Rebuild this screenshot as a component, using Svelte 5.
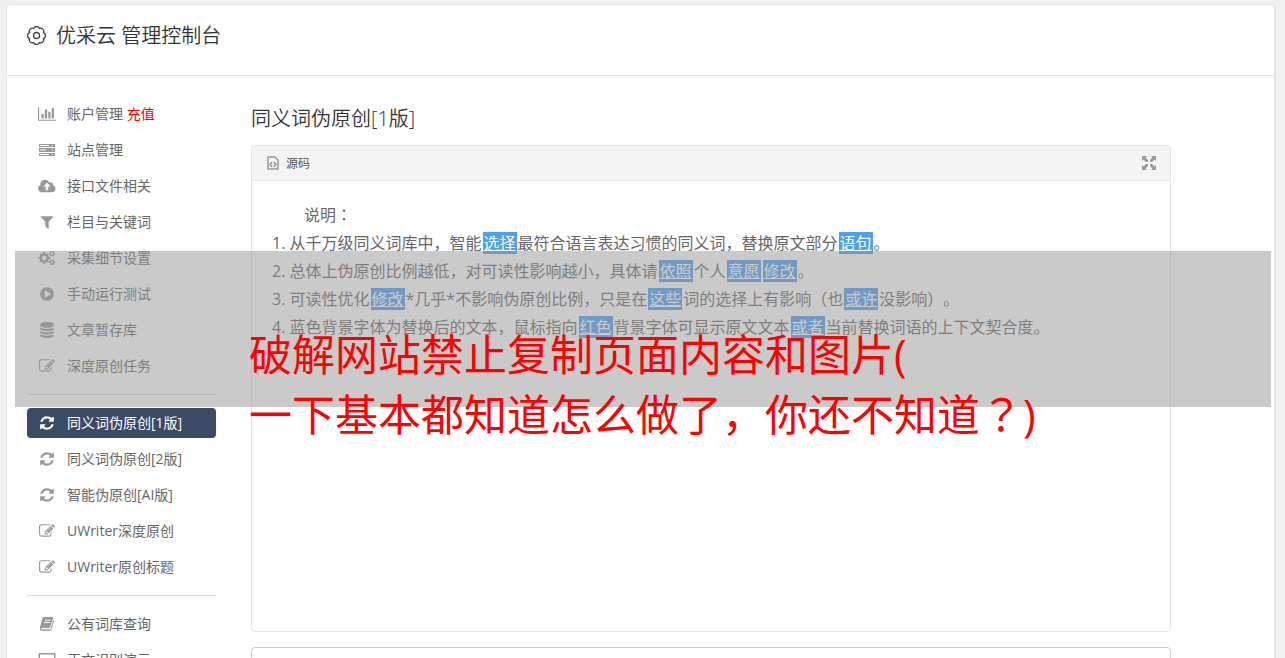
<script>
  const pencil =
    "M888 1184l116-116-152-152-116 116v56h96v96h56zm440-720q-16-16-33 1l-350 350q-17 17-1 33t33-1l350-350q17-17 1-33zm80 594v190q0 119-84.5 203.5t-203.5 84.5h-832q-119 0-203.5-84.5t-84.5-203.5v-832q0-119 84.5-203.5t203.5-84.5h832q63 0 117 25 15 7 18 23 3 17-9 29l-49 49q-14 14-32 8-23-6-45-6h-832q-66 0-113 47t-47 113v832q0 66 47 113t113 47h832q66 0 113-47t47-113v-126q0-13 9-22l64-64q15-15 35-7t20 29zm-96-738l288 288-672 672h-288v-288zm444 132l-92 92-288-288 92-92q28-28 68-28t68 28l152 152q28 28 28 68t-28 68z";
  const refresh =
    "M1639 1056q0 5-1 7-64 268-268 434.5t-478 166.5q-146 0-282.5-55t-243.5-157l-129 129q-19 19-45 19t-45-19-19-45v-448q0-26 19-45t45-19h448q26 0 45 19t19 45-19 45l-137 137q71 66 161 102t187 36q134 0 250-65t186-179q11-17 53-117 8-23 30-23h192q13 0 22.5 9.5t9.5 22.5zm25-800v448q0 26-19 45t-45 19h-448q-26 0-45-19t-19-45 19-45l138-138q-148-137-349-137-134 0-250 65t-186 179q-11 17-53 117-8 23-30 23h-199q-13 0-22.5-9.5t-9.5-22.5v-7q65-268 270-434.5t480-166.5q146 0 284 55.5t245 156.5l130-129q19-19 45-19t45 19 19 45z";

  // toothed ring around cx, cy, with the hole cut by evenodd
  function cog(cx, cy, outer, inner, hole, teeth) {
    const points = [];
    const step = (Math.PI * 2) / teeth;
    for (let i = 0; i < teeth; i++) {
      for (const [offset, r] of [
        [-0.3, inner],
        [-0.2, outer],
        [0.2, outer],
        [0.3, inner],
      ]) {
        const a = (i + offset) * step;
        points.push(
          `${(cx + r * Math.cos(a)).toFixed(2)} ${(cy + r * Math.sin(a)).toFixed(2)}`,
        );
      }
    }
    return `M${points.join("L")}ZM${cx - hole} ${cy}a${hole} ${hole} 0 1 0 ${hole * 2} 0a${hole} ${hole} 0 1 0 ${-hole * 2} 0z`;
  }

  // outline of rounded bumps for the header gear
  function scallop(c, r, bumps) {
    let d = "";
    for (let i = 0; i <= bumps; i++) {
      const a = ((i + 0.5) * Math.PI * 2) / bumps;
      const x = (c + r * Math.cos(a)).toFixed(2);
      const y = (c + r * Math.sin(a)).toFixed(2);
      d += i ? `A3.300 3.300 0 0 1 ${x} ${y}` : `M${x} ${y}`;
    }
    return d + "z";
  }

  const icons = {
    chart: {
      box: "0 0 2048 1792",
      d: "M640 896v512h-256v-512h256zm384-512v1024h-256v-1024h256zm1024 1152v128h-2048v-1536h128v1408h1920zm-640-896v768h-256v-768h256zm384-384v1152h-256v-1152h256z",
    },
    server: {
      box: "0 0 18 16",
      d: "M1.500 2h15q.5 0 .5.500v2q0 .5-.5.5h-15q-.5 0-.5-.5v-2q0-.5.5-.5zM2 3v1h9v-1zM14 3v1h1v-1zM1.500 6h15q.5 0 .5.500v3q0 .5-.5.5h-15q-.5 0-.5-.5v-3q0-.5.5-.5zM2 7.500v1h6v-1zM14 7.500v1h1v-1zM1.500 11h15q.5 0 .5.500v2q0 .5-.5.5h-15q-.5 0-.5-.5v-2q0-.5.5-.5zM2 12v1h9v-1zM14 12v1h1v-1z",
    },
    cloud: {
      box: "0 0 18 16",
      d: "M4 14.300A4 4 0 0 1 2.400 6.700Q2.300 2 7 1.700 10 1.700 11.500 4.400 15 4 15 7.300A3.600 3.600 0 0 1 14.300 14.300zM9 4.700L5.300 8.400H7.700V12.200H10.300V8.400H12.700z",
    },
    filter: {
      box: "0 0 1792 1792",
      d: "M1595 295q17 41-14 70l-493 493v742q0 42-39 59-13 5-25 5-27 0-45-19l-256-256q-19-19-19-45v-486l-493-493q-31-29-14-70 17-39 59-39h1280q42 0 59 39z",
    },
    cogs: {
      box: "0 0 18 16",
      d: cog(6.3, 8, 6, 4.6, 2.2, 8) + cog(14.2, 3.7, 3.2, 2.3, 1.1, 6) + cog(14.2, 12.3, 3.2, 2.3, 1.1, 6),
    },
    play: {
      box: "0 0 1792 1792",
      d: "M896 128q209 0 385.5 103t279.500 279.500 103 385.500-103 385.500-279.500 279.500-385.500 103-385.500-103-279.500-279.500-103-385.500 103-385.500 279.500-279.500 385.500-103zm384 823q32-18 32-55t-32-55l-544-320q-31-19-64-1-32 19-32 56v640q0 37 32 56 16 8 32 8 17 0 32-9z",
    },
    database: {
      box: "0 0 1792 1792",
      d: "M896 768q237 0 443-43t325-127v170q0 69-103 128t-280 93.500-385 34.500-385-34.500-280-93.500-103-128v-170q119 84 325 127t443 43zm0 768q237 0 443-43t325-127v170q0 69-103 128t-280 93.500-385 34.500-385-34.500-280-93.500-103-128v-170q119 84 325 127t443 43zm0-384q237 0 443-43t325-127v170q0 69-103 128t-280 93.500-385 34.500-385-34.500-280-93.500-103-128v-170q119 84 325 127t443 43zm0-1152q208 0 385 34.500t280 93.500 103 128v128q0 69-103 128t-280 93.500-385 34.500-385-34.500-280-93.500-103-128v-128q0-69 103-128t280-93.500 385-34.500z",
    },
    pencil: { box: "0 0 1792 1792", d: pencil },
    refresh: { box: "0 0 1792 1792", d: refresh },
    book: {
      box: "0 0 16 16",
      d: "M4.800 1h8.200q1.300.1 1 1.400L11.300 11q-.4 1-1.400 1H2.800q-.8 0-.7.600.2.700 1 .7h7.600q.7 0 1-.7L14.500 4q.8.500.5 1.500l-2.700 8q-.5 1.200-1.600 1.200H3Q1.200 14.600.900 12.900.700 12 1 11L3.500 2.300Q4 1 4.800 1zM6 3.800L5.700 4.800H11.500L11.800 3.800zM5.300 6L5 7H10.800L11.100 6z",
    },
    monitor: {
      box: "0 0 18 16",
      d: "M1.500 1h15q1 0 1 1v10q0 1-1 1h-5v2h2v1h-9v-1h2v-2h-5q-1 0-1-1v-10q0-1 1-1zM2 2.500v8h14v-8z",
    },
  };

  const menu = [
    [
      { icon: "chart", label: "账户管理", extra: "充值" },
      { icon: "server", label: "站点管理" },
      { icon: "cloud", label: "接口文件相关" },
      { icon: "filter", label: "栏目与关键词" },
      { icon: "cogs", label: "采集细节设置" },
      { icon: "play", label: "手动运行测试" },
      { icon: "database", label: "文章暂存库" },
      { icon: "pencil", label: "深度原创任务" },
    ],
    [
      { icon: "refresh", label: "同义词伪原创[1版]" },
      { icon: "refresh", label: "同义词伪原创[2版]" },
      { icon: "refresh", label: "智能伪原创[AI版]" },
      { icon: "pencil", label: "UWriter深度原创" },
      { icon: "pencil", label: "UWriter原创标题" },
    ],
    [
      { icon: "book", label: "公有词库查询" },
      { icon: "monitor", label: "正文识别演示" },
    ],
  ];
  let active = $state("同义词伪原创[1版]");

  // replaced words are wrapped in braces
  const lines = [
    "1. 从千万级同义词库中，智能{选择}最符合语言表达习惯的同义词，替换原文部分{语句}。",
    "2. 总体上伪原创比例越低，对可读性影响越小，具体请{依照}个人{意愿}{修改}。",
    "3. 可读性优化{修改}*几乎*不影响伪原创比例，只是在{这些}词的选择上有影响（也{或许}没影响）。",
    "4. 蓝色背景字体为替换后的文本，鼠标指向{红色}背景字体可显示原文文本{或者}当前替换词语的上下文契合度。",
  ].map((line) => line.split(/[{}]/));
</script>

<div class="page">
  <div class="console">
    <header>
      <svg class="gear" viewBox="0 0 20 20" aria-hidden="true">
        <path d={scallop(10, 8, 8)} />
        <circle cx="10" cy="10" r="3.200" />
      </svg>
      <h1>优采云 管理控制台</h1>
    </header>

    <div class="content">
      <nav>
        {#each menu as group}
          <ul>
            {#each group as item}
              <li>
                <a
                  href="#{item.icon}"
                  class:active={active === item.label}
                  onclick={() => (active = item.label)}
                >
                  <span class="icon">
                    <svg viewBox={icons[item.icon].box} aria-hidden="true">
                      <path fill-rule="evenodd" d={icons[item.icon].d} />
                    </svg>
                  </span>
                  <span class="label">
                    {item.label}
                    {#if item.extra}<span class="extra">{item.extra}</span>{/if}
                  </span>
                </a>
              </li>
            {/each}
          </ul>
        {/each}
      </nav>

      <main>
        <h2>同义词伪原创[1版]</h2>
        <section class="editor">
          <div class="toolbar">
            <button type="button">
              <svg class="source" viewBox="0 0 12 14" aria-hidden="true">
                <path d="M1 1h7l3 3v9H1z" />
                <path d="M5 6L3 8.500 5 11M7 6l2 2.500L7 11" />
              </svg>
              源码
            </button>
            <button type="button" aria-label="全屏">
              <svg class="expand" viewBox="0 0 14 14" aria-hidden="true">
                <path
                  d="M0 0h5L3.500 1.500 6 4v2H4L1.500 3.500 0 5zM14 0v5l-1.500-1.500L10 6H8V4l2.500-2.500L9 0zM0 14V9l1.500 1.500L4 8h2v2l-2.500 2.500L5 14zM14 14H9l1.500-1.500L8 10V8h2l2.500 2.500L14 9z"
                />
              </svg>
            </button>
          </div>
          <div class="text">
            <p class="intro">说明<span class="mark">：</span></p>
            {#each lines as parts}
              <p>
                {#each parts as part, i}{#if i % 2}<a href="#word">{part}</a>{:else}{part}{/if}{/each}
              </p>
            {/each}
          </div>
        </section>
        <textarea aria-label="原文" rows="6"></textarea>
      </main>
    </div>
  </div>

  <div class="band"></div>
  <p class="caption">
    破解网站禁止复制页面内容和图片(<br />一下基本都知道怎么做了，你还不知道<span class="mark">？</span>)
  </p>
</div>

<style>
  :global(body) {
    margin: 0;
    background: #f1f1f1;
  }

  .page {
    position: relative;
    box-sizing: border-box;
    height: 100vh;
    overflow: hidden;
    padding: 4px 9px 0 6px;
    font-family: "Open Sans", "Noto Sans CJK SC", sans-serif;
    font-size: 14px;
    text-spacing-trim: space-all;
    color: #666;
  }

  h1,
  h2,
  p,
  ul {
    margin: 0;
    padding: 0;
    font-weight: 400;
  }

  /* centres full-width punctuation in its cell */
  .mark {
    font-family: "Noto Sans CJK JP", sans-serif;
    line-height: 1;
  }

  .console {
    background: #fff;
    border: 1px solid #e5e5e5;
    border-right-width: 2px;
    border-radius: 4px 4px 0 0;
  }

  header {
    display: flex;
    align-items: center;
    gap: 10px;
    height: 62px;
    padding: 0 20px 8px;
    border-bottom: 1px solid #e5e5e5;
  }

  h1,
  h2 {
    font-size: 20px;
    font-weight: 350;
    line-height: 30px;
    color: #333;
  }

  .gear {
    width: 19px;
    height: 19px;
    margin-bottom: 2px;
    fill: none;
    stroke: #444;
    stroke-width: 1.4;
  }

  .content {
    display: flex;
    gap: 35px;
    padding: 23px 103px 20px 20px;
  }

  nav {
    flex: 0 0 189px;
  }

  ul {
    display: flex;
    flex-direction: column;
    gap: 6px;
    list-style: none;
  }

  ul + ul {
    margin-top: 13px;
    padding-top: 13px;
    border-top: 1px solid #ddd;
  }

  nav a {
    display: flex;
    align-items: center;
    gap: 10px;
    height: 30px;
    padding: 0 10px;
    border-radius: 4px;
    color: #666;
    text-decoration: none;
    white-space: nowrap;
  }

  nav a.active {
    background: #3b4b66;
    color: #fff;
  }

  .icon {
    display: flex;
    justify-content: center;
    width: 20px;
  }

  .icon svg {
    height: 16px;
    fill: #999;
  }

  .active .icon svg {
    fill: #fff;
  }

  .label {
    padding-bottom: 2px;
  }

  .extra {
    color: #f00;
  }

  main {
    flex: 1;
    min-width: 0;
  }

  h2 {
    margin: 5px 0 11px;
  }

  .editor {
    border: 1px solid #e5e5e5;
    border-radius: 4px;
  }

  .toolbar {
    display: flex;
    justify-content: space-between;
    align-items: center;
    height: 34px;
    padding: 0 14px 0 15px;
    background: #f4f4f4;
    border-bottom: 1px solid #e5e5e5;
    border-radius: 4px 4px 0 0;
  }

  button {
    display: flex;
    align-items: center;
    gap: 7px;
    padding: 0;
    border: 0;
    background: none;
    font: inherit;
    font-size: 12px;
    color: #555;
    cursor: pointer;
  }

  .source {
    width: 12px;
    height: 14px;
    fill: none;
    stroke: #999;
    stroke-width: 1.5;
  }

  .expand {
    width: 14px;
    height: 14px;
    fill: #999;
  }

  .text {
    min-height: 410px;
    padding: 20px 20px;
    font-size: 16px;
    line-height: 28px;
  }

  .text .intro {
    text-indent: 2em;
  }

  .text a {
    margin: 0 1px;
    padding: 0 1px;
    background: #4b9ff5;
    color: #fff;
    text-decoration: underline;
  }

  textarea {
    display: block;
    box-sizing: border-box;
    width: 100%;
    margin-top: 15px;
    padding: 10px;
    border: 1px solid #ccc;
    border-radius: 4px;
    font: inherit;
    resize: none;
  }

  .band {
    position: absolute;
    top: 251px;
    left: 15px;
    right: 14px;
    height: 156px;
    background: rgba(150, 150, 150, 0.5);
    pointer-events: none;
  }

  .caption {
    position: absolute;
    top: 325px;
    left: 249px;
    font-size: 43px;
    line-height: 60px;
    color: #f00;
    white-space: nowrap;
    pointer-events: none;
  }
</style>
